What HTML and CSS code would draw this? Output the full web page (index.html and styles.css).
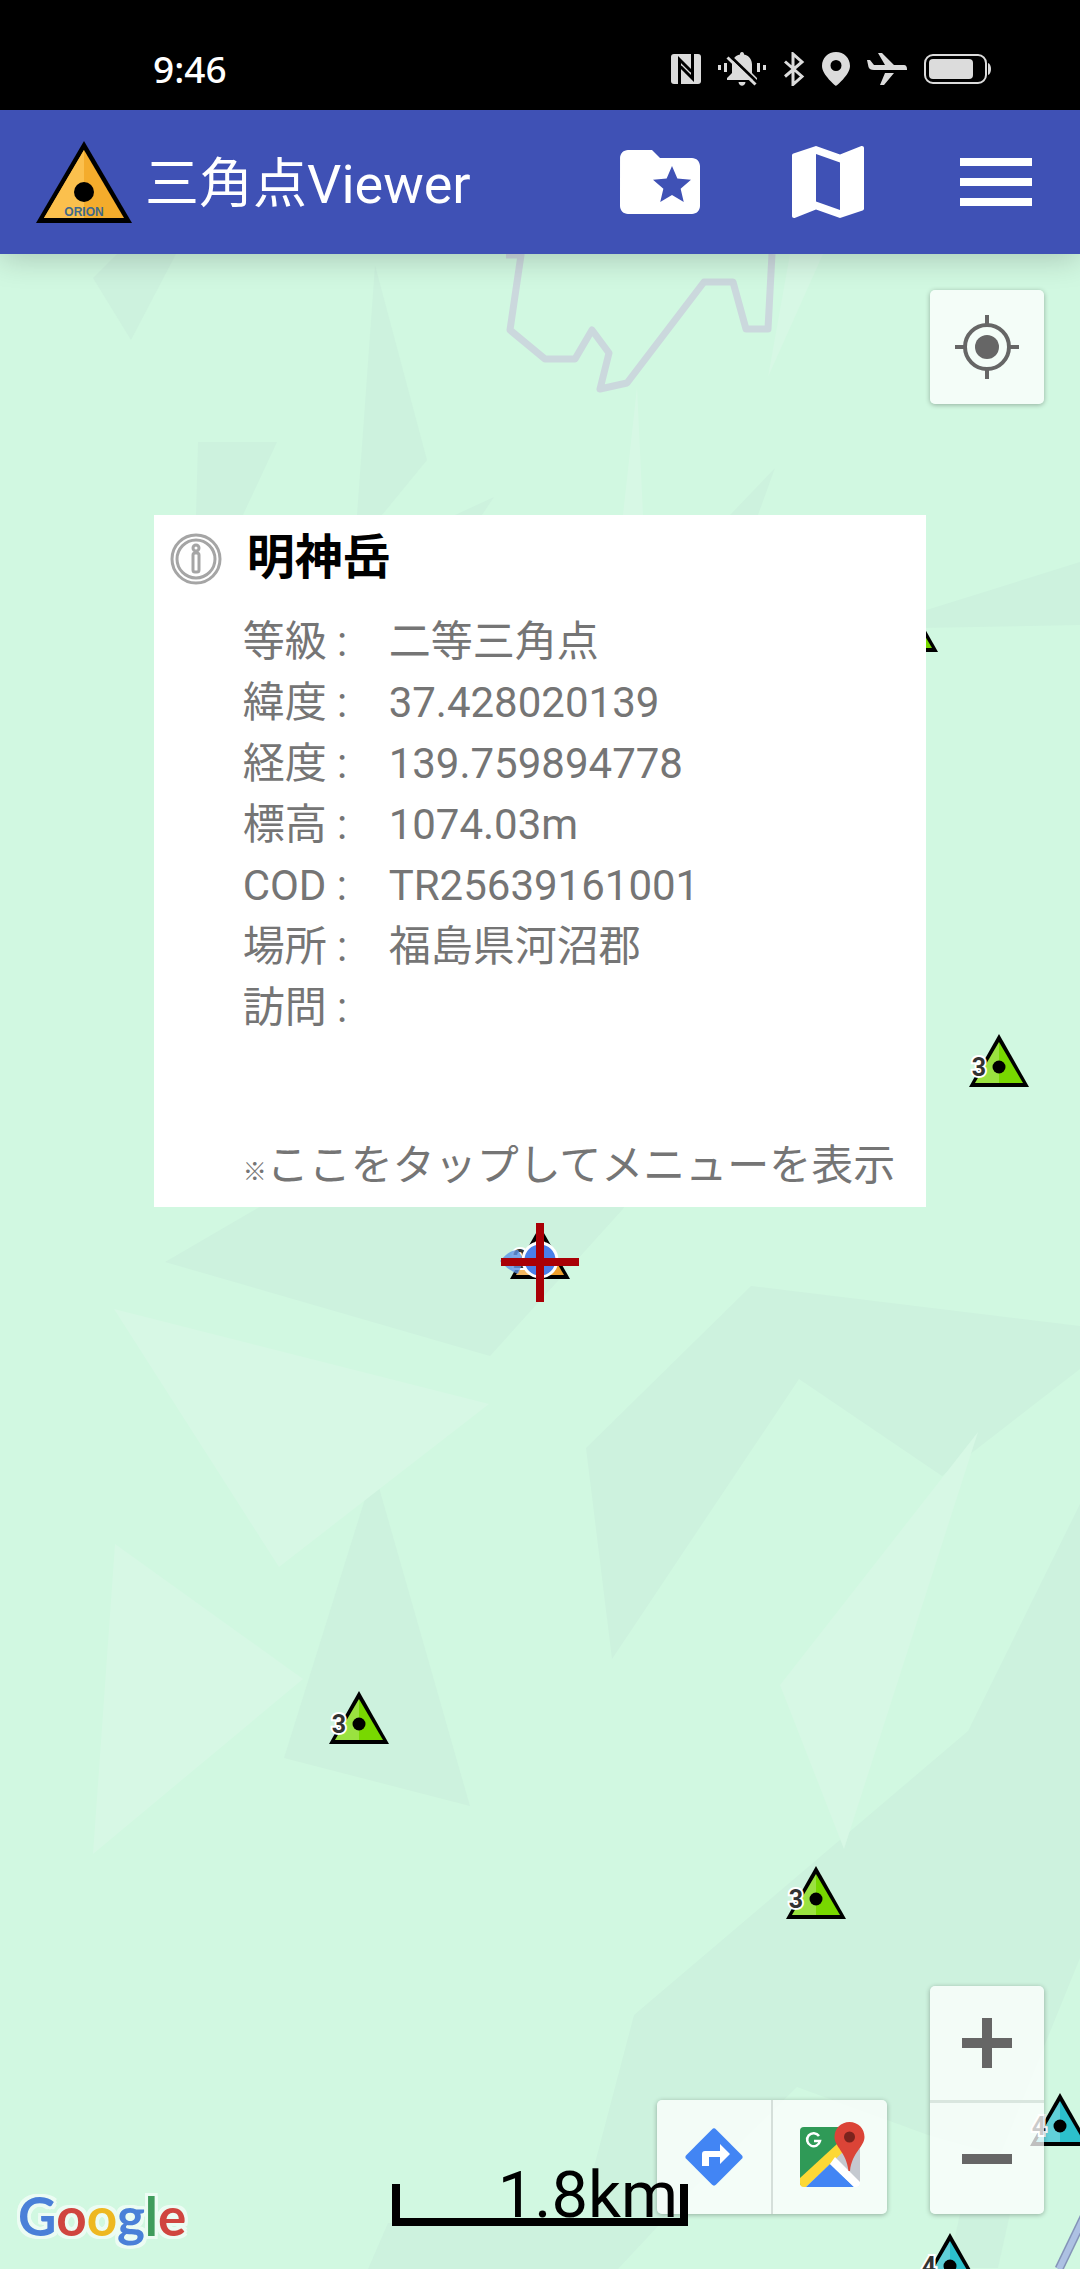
FILE: index.html
```html
<!DOCTYPE html>
<html lang="ja">
<head>
    <meta charset="UTF-8">
    <meta name="viewport" content="width=device-width, initial-scale=1.0">
    <title>三角点Viewer</title>
    <link rel="stylesheet" href="styles.css">
</head>
<body>
    <div class="status-bar">
        <span class="time">9:46</span>
        <div class="status-icons">
            <svg width="30" height="30" viewBox="0 0 30 30"><rect width="30" height="30" rx="3"/><path class="cut" d="M8.500 30V5.500l12 12M21.500 0v24.500l-12-12" fill="none"/></svg>
            <svg width="48" height="34" viewBox="0 0 48 34"><path d="M24 0c1.500 0 2 1 2 2.500 5 1 8 5 8 10V21l5 5v2H9v-2l5-5v-8.500c0-5 3-9 8-10C22 1 22.500 0 24 0zM20.500 30h7c-.5 5-6.500 5-7 0zM0 13h3v5H0zM6 11h3v9H6zM39 11h3v9h-3zM45 13h3v5h-3z"/><path class="cut" d="M11 3l28 27"/><path class="slash" d="M9.500 5.500l28 27"/></svg>
            <svg width="22" height="34" viewBox="0 0 22 34"><path class="line bluetooth" d="M2 9.500l17 15-9 8V2l9 8L2 24.500"/></svg>
            <svg width="28" height="34" viewBox="0 0 28 34"><path fill-rule="evenodd" d="M14 0C6 0 0 6 0 14c0 9 14 20 14 20s14-11 14-20C28 6 22 0 14 0zm0 19a5.500 5.500 0 1 1 0-11 5.500 5.500 0 0 1 0 11z"/></svg>
            <svg width="40" height="32" viewBox="0 0 40 32"><path d="M0 7h3l4 5h11L11 0h4l12 12h10c2 0 3 2 3 4v1H7c-3 0-5-1-5.500-3zM18 20h9L17 32h-4z"/></svg>
            <svg width="67" height="30" viewBox="0 0 67 30"><rect class="line" x="1" y="1" width="61" height="28" rx="8"/><rect x="5" y="5" width="44" height="20" rx="4"/><path d="M64 9c4 1 4 11 0 12z"/></svg>
        </div>
    </div>

    <header class="app-bar">
        <svg class="logo" viewBox="0 0 96 82">
            <path d="M48 0L96 82H0z"/>
            <path d="M48 9L8 77h80z" fill="#f4ac2c"/>
            <path d="M48 9L8 77h40z" fill="#fbc04d"/>
            <circle cx="48" cy="51" r="10"/>
            <text x="48" y="75" text-anchor="middle">ORION</text>
        </svg>
        <h1>三角点Viewer</h1>
        <nav class="actions">
            <button aria-label="お気に入り">
                <svg viewBox="0 0 24 24"><path d="M20 6h-8l-2-2H4c-1.100 0-1.990.9-1.990 2L2 18c0 1.100.9 2 2 2h16c1.100 0 2-.9 2-2V8c0-1.100-.9-2-2-2zm-2.060 11L15 15.280 12.060 17l.78-3.330-2.590-2.240 3.410-.29L15 8l1.340 3.140 3.410.29-2.590 2.240.78 3.330z"/></svg>
            </button>
            <button aria-label="地図">
                <svg viewBox="0 0 24 24"><path d="M20.500 3l-.16.03L15 5.100 9 3 3.360 4.900c-.21.07-.36.25-.36.48V20.500c0 .28.22.5.5.5l.16-.03L9 18.900l6 2.100 5.640-1.900c.21-.07.36-.25.36-.48V3.500c0-.28-.22-.5-.5-.5zM15 19l-6-2.110V5l6 2.110V19z"/></svg>
            </button>
            <button aria-label="メニュー">
                <svg viewBox="0 0 24 24"><path d="M3 18h18v-2H3v2zm0-5h18v-2H3v2zm0-7v2h18V6H3z"/></svg>
            </button>
        </nav>
    </header>

    <main class="map">
        <svg class="terrain" viewBox="0 254 1080 2015" preserveAspectRatio="xMidYMid slice">
            <defs>
                <!-- origin of the marker is its black dot -->
                <g id="triangle">
                    <path d="M0-33L30 20h-60z" fill="#000"/>
                    <path d="M0-25L24 16h-48z" fill="currentColor"/>
                    <path d="M0-25V16h-24z" fill="#fff" opacity=".25"/>
                    <circle r="6.500" fill="#000"/>
                </g>
            </defs>

            <g class="shade">
                <path d="M117 254h59l-45 86-38-62z"/>
                <path d="M375 265l52 195-45 55h-25z"/>
                <path d="M198 442h79l-34 73h-47z"/>
                <path d="M494 497l-12 18h-27z"/>
                <path d="M775 468l-17 47h-28z"/>
                <path d="M1080 562L920 612v16l160-3z"/>
                <path d="M165 1262l175-102h310l-27 49-133 147z"/>
                <path d="M751 1286l329 40v43l-138 107-143-97-187 280-26-211z"/>
                <path d="M374 1470l96 336-186-48z"/>
                <path d="M1080 1504l-112 227-334 284-40 152 0 50h70l133-130 131 48 72 20 80-197z"/>
                <path d="M388 2223h273l-43 46H368z"/>
                <path d="M960 2214h50l-12 54h-50z"/>
            </g>
            <g class="light">
                <path d="M637 387l6 128h-20z"/>
                <path d="M790 254h33l-55 123z"/>
                <path d="M114 1309l375 95-107 83-103 80z"/>
                <path d="M115 1544l188 135L93 1854z"/>
                <path d="M978 1432l-134 417-64-164z"/>
            </g>

            <path class="border" d="M506 255h15l-11 75 35 29h30l17-29 17 23-9 36 27-6 77-101h29l13 47h22l4-75"/>
            <path class="river-edge" d="M1085 2215l-26 54"/>
            <path class="river" d="M1085 2215l-26 54"/>

            <g class="pins">
                <g class="third"><use href="#triangle" x="908" y="632"/></g>
                <g class="third"><use href="#triangle" x="999" y="1067"/><text x="979" y="1076">3</text></g>
                <g class="third"><use href="#triangle" x="359" y="1724"/><text x="339" y="1733">3</text></g>
                <g class="third"><use href="#triangle" x="816" y="1899"/><text x="796" y="1908">3</text></g>
                <g class="fourth"><use href="#triangle" x="1060" y="2126"/><text x="1039" y="2135">4</text></g>
                <g class="fourth"><use href="#triangle" x="950" y="2266"/><text x="929" y="2275">4</text></g>
                <g class="second"><use href="#triangle" x="540" y="1259"/><text x="520" y="1268">2</text></g>
            </g>

            <path d="M500 1261c6-6 10-11 18-11l6 10-6 14c-7-3-13-7-18-13z" fill="#5d93e6" opacity=".8"/>
            <circle cx="540" cy="1260" r="17" fill="#4a80ea" stroke="#fff" stroke-width="3"/>
            <path d="M501 1262h78M540 1223v79" stroke="#a90006" stroke-width="8"/>
        </svg>

        <section class="info-window">
            <header>
                <svg viewBox="0 0 52 52">
                    <circle cx="26" cy="26" r="24"/>
                    <circle cx="26" cy="26" r="19"/>
                    <rect x="23" y="20" width="6" height="19" rx="2"/>
                    <circle cx="26" cy="15" r="3"/>
                </svg>
                <h2>明神岳</h2>
            </header>
            <table>
                <tr><th scope="row">等級 :</th><td>二等三角点</td></tr>
                <tr><th scope="row">緯度 :</th><td>37.428020139</td></tr>
                <tr><th scope="row">経度 :</th><td>139.759894778</td></tr>
                <tr><th scope="row">標高 :</th><td>1074.03m</td></tr>
                <tr><th scope="row">COD :</th><td>TR25639161001</td></tr>
                <tr><th scope="row">場所 :</th><td>福島県河沼郡</td></tr>
                <tr><th scope="row">訪問 :</th><td></td></tr>
            </table>
            <p><small>※</small>ここをタップしてメニューを表示</p>
        </section>

        <button class="control locate" aria-label="現在地">
            <svg width="64" height="64" viewBox="0 0 64 64">
                <circle cx="32" cy="32" r="12" fill="#666"/>
                <circle cx="32" cy="32" r="22" fill="none" stroke="#666" stroke-width="4"/>
                <path d="M32 0v9M32 55v9M0 32h9M55 32h9" stroke="#666" stroke-width="4"/>
            </svg>
        </button>

        <div class="map-controls">
            <div class="control-group">
                <button class="control" aria-label="ルート">
                    <svg width="60" height="60" viewBox="-30 -30 60 60">
                        <rect x="-21" y="-21" width="42" height="42" rx="3" transform="rotate(45)" fill="#4285f4"/>
                        <path d="M-12 9V-3q0-3 3-3H6v-7l10 10L6 7V0H-5v9z" fill="#fff"/>
                    </svg>
                </button>
                <button class="control" aria-label="Google マップ">
                    <svg class="maps-icon" width="60" height="60" viewBox="0 0 60 60">
                        <rect width="60" height="60" rx="4" fill="#e4e8ea"/>
                        <path d="M4 0h42v14L0 58V4q0-4 4-4z" fill="#2f9a57"/>
                        <path d="M60 14v42L34 30z" fill="#c5c9d0"/>
                        <path d="M0 51L37 17l7 7L6 60H4q-4 0-4-4z" fill="#fdd835"/>
                        <path d="M30 37L6 60h48z" fill="#4285f4"/>
                        <path d="M30 37l5-7 25 25v1q0 4-4 4h-2z" fill="#fff"/>
                        <path d="M49.500-5c-8.500 0-15 6.500-15 15 0 10 12 15 14 34h1.500c2-19 14.500-24 14.500-34 0-8.500-6.500-15-15-15z" fill="#db4437"/>
                        <circle cx="49.500" cy="10" r="5.500" fill="#7b231d"/>
                        <path d="M19 9a6.500 6.500 0 1 0 1 5h-6" fill="none" stroke="#fff" stroke-width="2.500"/>
                    </svg>
                </button>
            </div>
            <div class="control-group vertical">
                <button class="control" aria-label="ズームイン">
                    <svg width="50" height="50" viewBox="0 0 50 50"><path d="M0 25h50M25 0v50" stroke="#666" stroke-width="10"/></svg>
                </button>
                <button class="control" aria-label="ズームアウト">
                    <svg width="50" height="50" viewBox="0 0 50 50"><path d="M0 25h50" stroke="#666" stroke-width="10"/></svg>
                </button>
            </div>
        </div>

        <div class="scale">1.8km</div>
        <div class="google"><span class="blue">G</span><span class="red">o</span><span class="yellow">o</span><span class="blue">g</span><span class="green">l</span><span class="red">e</span></div>
    </main>
</body>
</html>
```

FILE: styles.css
```css
* {
    box-sizing: border-box;
}
body {
    margin: 0;
    min-height: 100vh;
    display: flex;
    flex-direction: column;
    font-family: Roboto, "Noto Sans CJK JP", sans-serif;
    background: #000;
}
h1, h2, p {
    margin: 0;
}
button {
    border: none;
    padding: 0;
    background: none;
    cursor: pointer;
}

/* status bar */
.status-bar {
    height: 110px;
    padding: 28px 89px 0 153px;
    display: flex;
    justify-content: space-between;
    align-items: center;
    color: #fff;
}
.time {
    font-family: "Noto Sans", sans-serif;
    font-size: 37px;
    font-weight: 500;
    line-height: 46px;
}
.status-icons {
    display: flex;
    align-items: center;
    gap: 17px;
    fill: #dcdcdc;
}
.status-icons .line,
.status-icons .slash {
    fill: none;
    stroke: #dcdcdc;
    stroke-width: 2;
}
.status-icons .slash,
.status-icons .bluetooth {
    stroke-width: 3;
}
.status-icons .cut {
    stroke: #000;
    stroke-width: 3;
}

/* app bar */
.app-bar {
    height: 144px;
    padding: 0 36px;
    display: flex;
    align-items: center;
    background: #3f51b5;
    color: #fff;
    box-shadow: 0 4px 30px rgba(0, 0, 0, 0.2);
    z-index: 1;
}
.logo {
    width: 96px;
    height: 82px;
    margin-right: 13px;
}
.logo text {
    font: bold 12px "Liberation Sans", sans-serif;
    fill: #40688a;
}
.app-bar h1 {
    padding-bottom: 5px;
    font-size: 54px;
    font-weight: 400;
}
.actions {
    margin-left: auto;
    display: flex;
    gap: 72px;
}
.actions svg {
    display: block;
    width: 96px;
    fill: #fff;
}

/* map */
.map {
    flex: 1;
    position: relative;
    overflow: hidden;
    padding-top: 261px;
    background: #d1f8e1;
}
.terrain {
    position: absolute;
    top: 0;
    left: 0;
    width: 100%;
    height: 100%;
}
.shade {
    fill: #cdf2de;
}
.light {
    fill: #d7f8e5;
}
.border {
    fill: none;
    stroke: #cbd8dd;
    stroke-width: 7;
    stroke-linejoin: round;
}
.river {
    stroke: #adc1e3;
    stroke-width: 6;
}
.river-edge {
    stroke: #8494b8;
    stroke-width: 9;
}
.pins text {
    font-size: 25px;
    font-weight: 700;
    text-anchor: middle;
    fill: #333;
    stroke: #fff;
    stroke-width: 4px;
    paint-order: stroke;
}
.second {
    color: #f0a02c;
}
.third {
    color: #78d800;
}
.fourth {
    color: #2cc0cc;
}

/* info window */
.info-window {
    position: relative;
    width: fit-content;
    margin: 0 auto;
    padding: 0 31px 11px 89px;
    background: #fff;
    color: #757575;
    font-size: 42px;
    line-height: 61px;
    white-space: nowrap;
}
.info-window header {
    display: flex;
    align-items: center;
    gap: 25px;
    height: 84px;
    margin: 0 0 12px -73px;
}
.info-window svg {
    width: 52px;
    margin-top: 4px;
    fill: none;
    stroke: #a5a5a5;
    stroke-width: 3;
}
.info-window h2 {
    font-size: 48px;
    font-weight: 700;
    color: #000;
}
.info-window table {
    border-collapse: collapse;
}
.info-window tr {
    height: 61px;
}
.info-window th,
.info-window td {
    padding: 0;
    text-align: left;
    font-weight: 400;
}
.info-window th {
    width: 146px;
}
.info-window p {
    margin-top: 97px;
}
.info-window small {
    font-size: 24px;
    font-weight: 700;
    line-height: 24px;
}

/* buttons over the map */
.control {
    width: 114px;
    height: 114px;
    display: flex;
    align-items: center;
    justify-content: center;
}
.locate,
.control-group {
    background: rgba(255, 255, 255, 0.75);
    border-radius: 5px;
    box-shadow: 0 1px 5px rgba(0, 0, 0, 0.3);
}
.locate {
    position: absolute;
    top: 36px;
    right: 36px;
}
.map-controls {
    position: absolute;
    right: 36px;
    bottom: 55px;
    display: flex;
    align-items: flex-end;
    gap: 43px;
}
.control-group {
    display: flex;
}
.control-group .control + .control {
    width: 116px;
    border-left: 2px solid #d5dfda;
}
.control-group.vertical {
    flex-direction: column;
}
.control-group.vertical .control + .control {
    width: 114px;
    border-left: none;
    border-top: 3px solid #d9e6df;
}
.maps-icon {
    overflow: visible;
}

.scale {
    position: absolute;
    left: 50%;
    bottom: 43px;
    width: 296px;
    height: 42px;
    margin-left: -148px;
    padding-right: 2px;
    display: flex;
    align-items: flex-end;
    justify-content: flex-end;
    border: 8px solid #000;
    border-top: none;
    color: #000;
    font-size: 65px;
    line-height: 46px;
}
.google {
    position: absolute;
    left: 18px;
    bottom: 27px;
    font-family: Lato, sans-serif;
    font-size: 53px;
    font-weight: 700;
    line-height: 53px;
    filter: drop-shadow(3px 0 0 #ecfcf3) drop-shadow(-3px 0 0 #ecfcf3) drop-shadow(0 3px 0 #ecfcf3) drop-shadow(0 -3px 0 #ecfcf3);
}
.blue {
    color: #4a80d8;
}
.red {
    color: #d0453f;
}
.yellow {
    color: #eeb821;
}
.green {
    color: #3f9c5c;
}
```
